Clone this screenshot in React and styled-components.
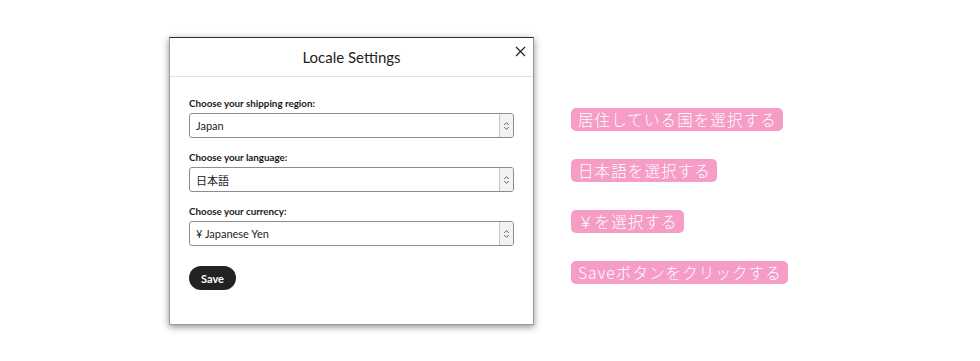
import React from "react";
import styled, { createGlobalStyle } from "styled-components";

const GlobalStyle = createGlobalStyle`
  html, body {
    margin: 0;
    padding: 0;
    background: #ffffff;
  }
  body {
    font-family: Lato, "Noto Sans", sans-serif;
  }
`;

export const Page = styled.div`
  width: 980px;
  height: 361px;
  display: flex;
  align-items: flex-start;
  padding: 37px 0 0 169px;
  box-sizing: border-box;
  gap: 37px;
`;

export const Modal = styled.div`
  position: relative;
  width: 365px;
  height: 288px;
  box-sizing: border-box;
  background: #ffffff;
  border: 1px solid #9a9a9a;
  border-top: 1.5px solid #2e2e2e;
  box-shadow: 0 2px 7px rgba(0, 0, 0, 0.45);
`;

export const ModalHeader = styled.div`
  height: 38px;
  display: flex;
  align-items: center;
  justify-content: center;
  border-bottom: 1px solid #e2e2e2;
`;

export const Title = styled.h2`
  margin: 0;
  font-family: Lato, sans-serif;
  font-weight: 400;
  font-size: 15px;
  color: #222;
`;

export const CloseButton = styled.button`
  position: absolute;
  top: 6px;
  right: 6px;
  width: 14px;
  height: 14px;
  padding: 0;
  border: 0;
  background: none;
  display: flex;
  align-items: center;
  justify-content: center;
`;

export const Body = styled.div`
  padding: 20px 19px 0 19px;
  display: flex;
  flex-direction: column;
`;

export const Field = styled.div`
  display: flex;
  flex-direction: column;
  gap: 4px;
  margin-bottom: 13px;
`;

export const Label = styled.label`
  font-family: Lato, sans-serif;
  font-weight: 700;
  font-size: 9.8px;
  color: #1a1a1a;
  line-height: 12px;
`;

export const SelectBox = styled.div`
  height: 25px;
  box-sizing: border-box;
  border: 1px solid #8c8c8c;
  border-radius: 3px;
  display: flex;
  align-items: stretch;
  background: #fff;
  overflow: hidden;
`;

export const SelectValue = styled.div`
  flex: 1;
  display: flex;
  align-items: center;
  padding-left: 6px;
  font-family: Lato, "Noto Sans CJK JP", sans-serif;
  font-size: 11px;
  color: #222;
`;

export const Stepper = styled.div`
  width: 13px;
  border-left: 1px solid #c4c4c4;
  background: #f2f2f2;
  display: flex;
  align-items: center;
  justify-content: center;
`;

export const SaveButton = styled.button`
  align-self: flex-start;
  margin-top: 7px;
  width: 47px;
  height: 24px;
  border: 0;
  border-radius: 12px;
  background: #222222;
  color: #fff;
  font-family: Lato, sans-serif;
  font-weight: 700;
  font-size: 11px;
  padding: 0;
`;

export const Steps = styled.div`
  display: flex;
  flex-direction: column;
  align-items: flex-start;
  padding-top: 71px;
  gap: 28px;
`;

export const Badge = styled.div`
  background: #f59cc7;
  border-radius: 5px;
  padding: 0 6px 0 7px;
  height: 23px;
  display: flex;
  align-items: center;
  color: #fff;
  font-family: "Noto Sans CJK JP", sans-serif;
  font-weight: 300;
  font-size: 15.5px;
  line-height: 23px;
  letter-spacing: 1.1px;
`;

const Arrows = () => (
  <svg width="7" height="10" viewBox="0 0 7 10" fill="none" stroke="#555" strokeWidth="0.9">
    <path d="M1.2 4 L3.5 1.6 L5.8 4" />
    <path d="M1.2 6 L3.5 8.4 L5.8 6" />
  </svg>
);

const Select = ({ value }) => (
  <SelectBox>
    <SelectValue>{value}</SelectValue>
    <Stepper>
      <Arrows />
    </Stepper>
  </SelectBox>
);

const fields = [
  { label: "Choose your shipping region:", value: "Japan" },
  { label: "Choose your language:", value: "日本語" },
  { label: "Choose your currency:", value: "¥ Japanese Yen" }
];

const steps = [
  "居住している国を選択する",
  "日本語を選択する",
  "￥を選択する",
  "Saveボタンをクリックする"
];

export default function App() {
  return (
    <>
      <GlobalStyle />
      <Page>
        <Modal>
          <ModalHeader>
            <Title>Locale Settings</Title>
          </ModalHeader>
          <CloseButton aria-label="close">
            <svg width="11" height="11" viewBox="0 0 11 11" stroke="#222" strokeWidth="1.2">
              <path d="M1 1 L10 10 M10 1 L1 10" />
            </svg>
          </CloseButton>
          <Body>
            {fields.map(f => (
              <Field key={f.label}>
                <Label>{f.label}</Label>
                <Select value={f.value} />
              </Field>
            ))}
            <SaveButton>Save</SaveButton>
          </Body>
        </Modal>
        <Steps>
          {steps.map(s => (
            <Badge key={s}>{s}</Badge>
          ))}
        </Steps>
      </Page>
    </>
  );
}
